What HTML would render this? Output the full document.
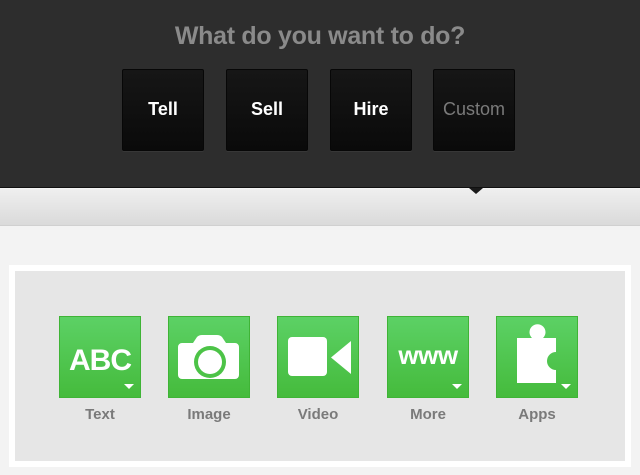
<!DOCTYPE html>
<html><head><style>
*{margin:0;padding:0;box-sizing:border-box}
body{width:640px;height:475px;overflow:hidden;background:#f3f3f3;font-family:"Liberation Sans",sans-serif;position:relative}
.top{position:absolute;left:0;top:0;width:640px;height:188px;background:#2d2d2d;border-bottom:1px solid #111}
h1{position:absolute;top:22px;width:640px;text-align:center;font-size:25px;color:#8a8a8a;font-weight:bold;letter-spacing:-0.3px}
.b{position:absolute;top:69px;width:82px;height:82px;background:linear-gradient(#161616,#0a0a0a);border:1px solid #070707;border-radius:2px;color:#fff;font-weight:bold;font-size:18px;text-align:center;line-height:78px;box-shadow:0 1px 0 rgba(255,255,255,.05)}
.tri{position:absolute;left:469px;top:188px;width:0;height:0;border-left:7px solid transparent;border-right:7px solid transparent;border-top:6px solid #1a1a1a}
.band{position:absolute;top:189px;left:0;width:640px;height:37px;background:linear-gradient(#efefef,#dadada);border-bottom:1px solid #d0d0d0}
.panel{position:absolute;left:9px;top:265px;width:622px;height:202px;background:#e6e6e6;border:6px solid #fff}
.t{position:absolute;top:316px;width:82px;height:82px;background:linear-gradient(#5cd165,#45bb3c);border:1px solid #3fb436}
.t svg{position:absolute;left:0;top:0}
.l{position:absolute;top:406px;width:100px;text-align:center;font-size:15px;font-weight:bold;color:#7a7a7a}
.arr{position:absolute;right:6px;bottom:8px;width:0;height:0;border-left:5px solid transparent;border-right:5px solid transparent;border-top:5px solid #fff}
</style></head><body>
<div class="top"></div>
<h1>What do you want to do?</h1>
<div class="b" style="left:122px">Tell</div>
<div class="b" style="left:226px">Sell</div>
<div class="b" style="left:330px">Hire</div>
<div class="b" style="left:433px;color:#7a7a7a;font-weight:normal">Custom</div>
<div class="band"></div>
<div class="tri"></div>
<div class="panel"></div>

<div class="t" style="left:59px"><svg width="80" height="80"><text x="40" y="53" text-anchor="middle" font-family="Liberation Sans" font-weight="bold" font-size="30" letter-spacing="-1" fill="#fff">ABC</text></svg><div class="arr"></div></div>
<div class="t" style="left:168px"><svg width="80" height="80"><path d="M13 26 h11 l4 -6 q2 -2 5 -2 h15 q3 0 5 2 l4 6 h9 a4 4 0 0 1 4 4 v28 a4 4 0 0 1 -4 4 h-53 a4 4 0 0 1 -4 -4 v-28 a4 4 0 0 1 4 -4z" fill="#fff"/><circle cx="41" cy="45" r="16" fill="#4cc347"/><circle cx="41" cy="45" r="12" fill="#fff"/></svg></div>
<div class="t" style="left:277px"><svg width="80" height="80"><rect x="10" y="20" width="39" height="39" rx="4" fill="#fff"/><path d="M73 24 v33 l-20 -16.5z" fill="#fff"/></svg></div>
<div class="t" style="left:387px"><svg width="80" height="80"><text x="40" y="47" text-anchor="middle" font-family="Liberation Sans" font-weight="bold" font-size="26" letter-spacing="-0.5" fill="#fff">www</text></svg><div class="arr"></div></div>
<div class="t" style="left:496px"><svg width="80" height="80"><path d="M20 21 h15 a8 8 0 1 1 11 0 h13 v14 a9 9 0 0 0 0 18 v13 h-39z" fill="#fff"/></svg><div class="arr"></div></div>

<div class="l" style="left:50px">Text</div>
<div class="l" style="left:159px">Image</div>
<div class="l" style="left:268px">Video</div>
<div class="l" style="left:378px">More</div>
<div class="l" style="left:487px">Apps</div>
</body></html>
